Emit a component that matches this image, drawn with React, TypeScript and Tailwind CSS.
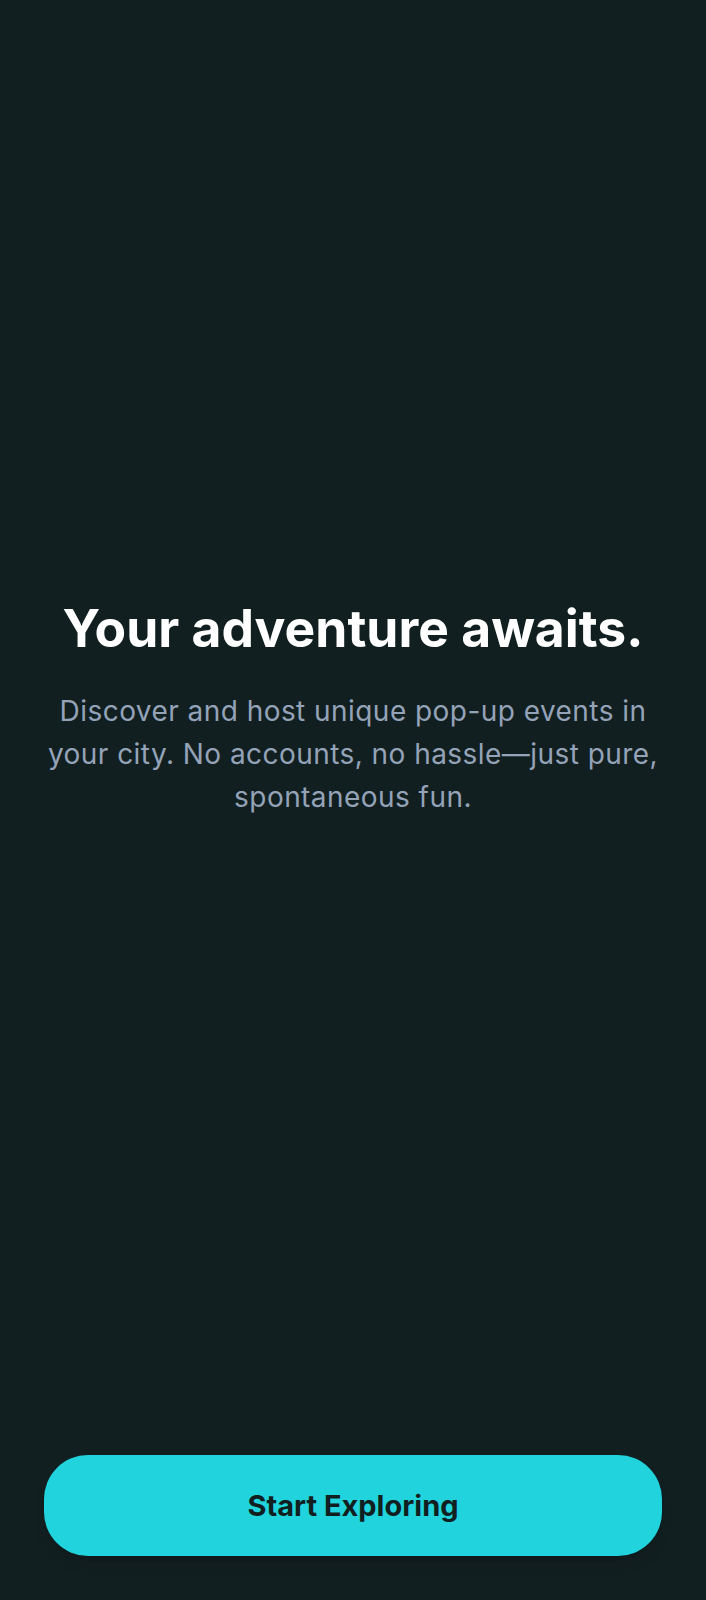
export default function App() {
  return (
    <div
      className="min-h-[1600px] w-full bg-[#121f21] flex flex-col px-11 pb-11"
      style={{ fontFamily: "Inter, 'Noto Sans', sans-serif" }}
    >
      {/* Hero copy */}
      <div className="flex-1 flex flex-col items-center justify-center text-center pb-9">
        <h1 className="text-[51.6px] leading-[56px] font-bold text-white">
          Your adventure awaits.
        </h1>
        <p className="mt-[34px] text-[28px] leading-[43px] tracking-[0.45px] text-[#94a3b8]">
          Discover and host unique pop-up events in your city. No accounts, no hassle—just pure,
          spontaneous fun.
        </p>
      </div>

      {/* CTA */}
      <button className="h-[101px] w-full rounded-[44px] bg-[#20d3dc] text-[#111f21] text-[29px] font-bold shadow-lg">
        Start Exploring
      </button>
    </div>
  );
}
